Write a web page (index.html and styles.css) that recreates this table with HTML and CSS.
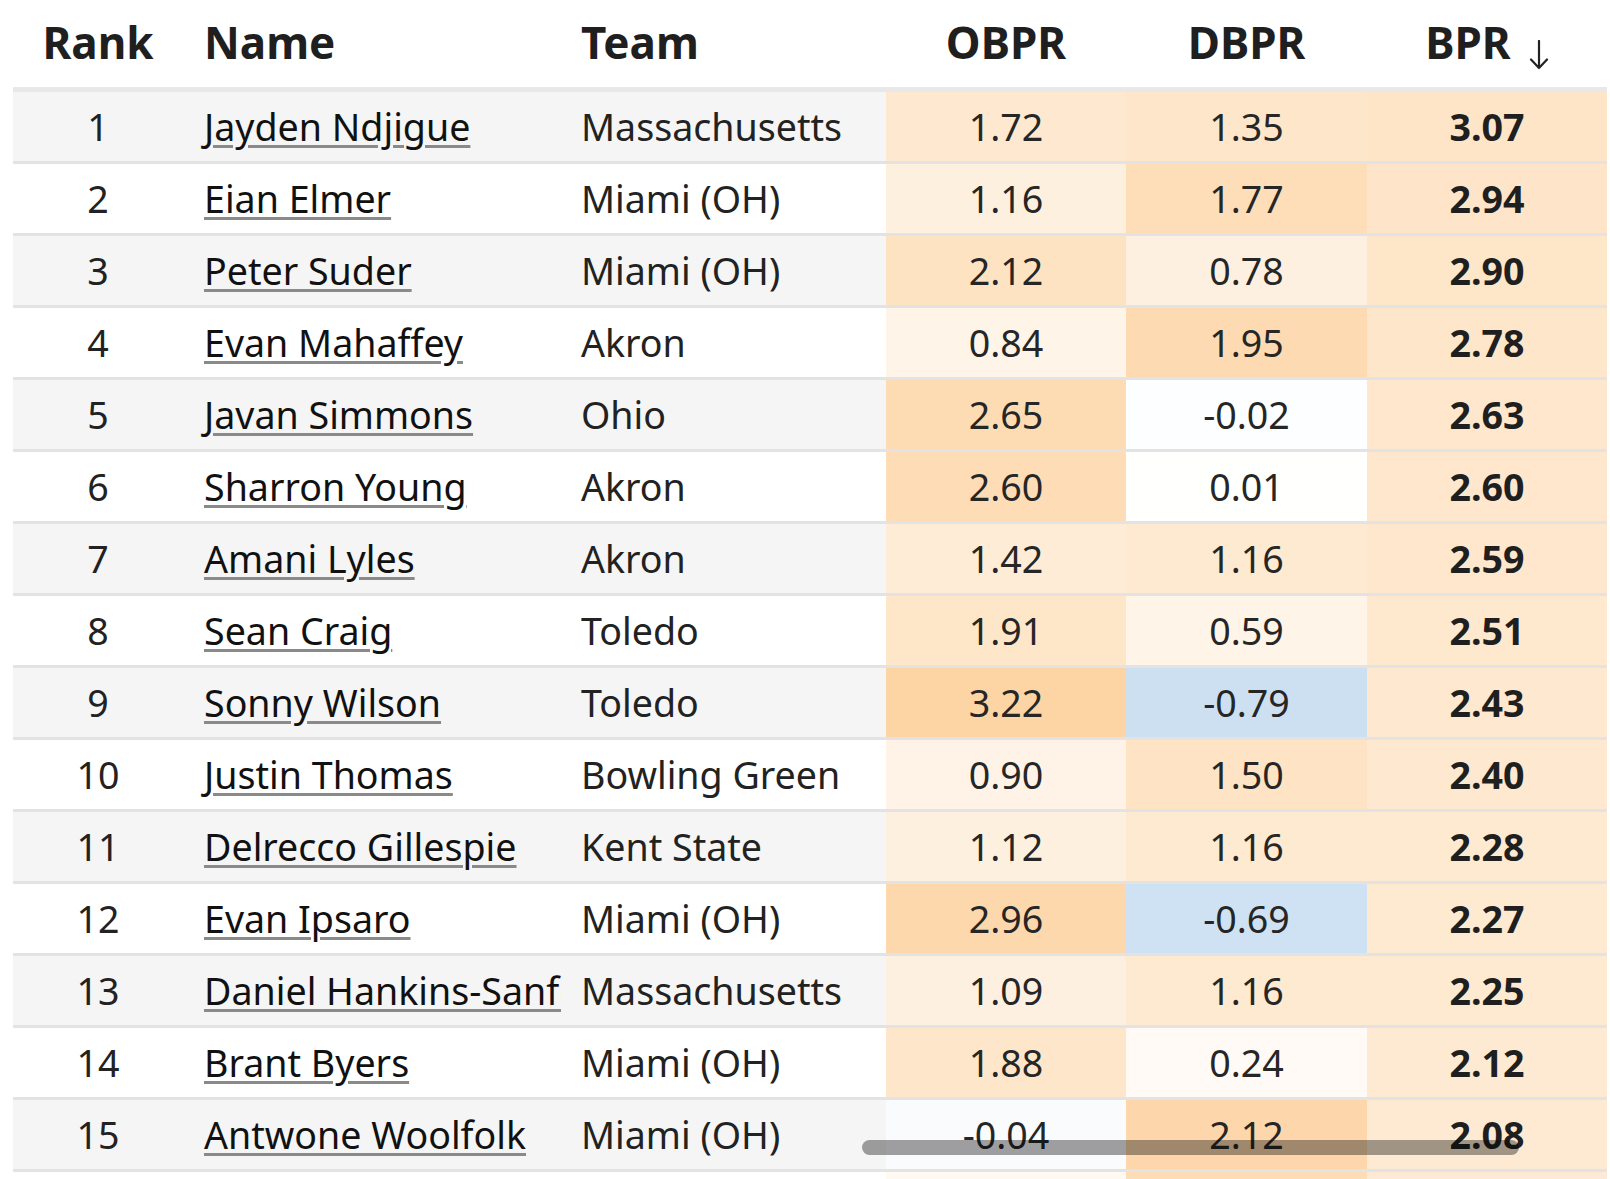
FILE: index.html
```html
<!DOCTYPE html>
<html lang="en">
<head>
<meta charset="utf-8">
<title>BPR Rankings</title>
<link rel="stylesheet" href="styles.css">
</head>
<body>
<table class="stats">
  <colgroup>
    <col class="col-rank">
    <col class="col-name">
    <col class="col-team">
    <col class="col-num">
    <col class="col-num2">
    <col class="col-num">
  </colgroup>
  <thead>
    <tr>
      <th class="h-center">Rank</th>
      <th class="h-left h-name">Name</th>
      <th class="h-left h-team">Team</th>
      <th class="h-center">OBPR</th>
      <th class="h-center">DBPR</th>
      <th class="h-center">BPR<svg class="sort-arrow" viewBox="0 0 20 30" width="20" height="30" aria-hidden="true"><path d="M10 1 V28 M2 19.5 L10 28 L18 19.5"/></svg></th>
    </tr>
  </thead>
  <tbody>
    <tr class="odd">
      <td class="rank">1</td><td class="name"><a href="#">Jayden Ndjigue</a></td><td class="team">Massachusetts</td>
      <td class="num" style="background:rgb(254,232,207)">1.72</td><td class="num" style="background:rgb(254,230,202)">1.35</td><td class="num bpr" style="background:rgb(254,229,199)">3.07</td>
    </tr>
    <tr>
      <td class="rank">2</td><td class="name"><a href="#">Eian Elmer</a></td><td class="team">Miami (OH)</td>
      <td class="num" style="background:rgb(254,240,222)">1.16</td><td class="num" style="background:rgb(253,222,185)">1.77</td><td class="num bpr" style="background:rgb(254,229,201)">2.94</td>
    </tr>
    <tr class="odd">
      <td class="rank">3</td><td class="name"><a href="#">Peter Suder</a></td><td class="team">Miami (OH)</td>
      <td class="num" style="background:rgb(254,227,195)">2.12</td><td class="num" style="background:rgb(254,240,224)">0.78</td><td class="num bpr" style="background:rgb(254,230,201)">2.90</td>
    </tr>
    <tr>
      <td class="rank">4</td><td class="name"><a href="#">Evan Mahaffey</a></td><td class="team">Akron</td>
      <td class="num" style="background:rgb(254,244,231)">0.84</td><td class="num" style="background:rgb(253,218,178)">1.95</td><td class="num bpr" style="background:rgb(254,230,203)">2.78</td>
    </tr>
    <tr class="odd">
      <td class="rank">5</td><td class="name"><a href="#">Javan Simmons</a></td><td class="team">Ohio</td>
      <td class="num" style="background:rgb(253,220,180)">2.65</td><td class="num" style="background:rgb(253,254,255)">-0.02</td><td class="num bpr" style="background:rgb(254,231,205)">2.63</td>
    </tr>
    <tr>
      <td class="rank">6</td><td class="name"><a href="#">Sharron Young</a></td><td class="team">Akron</td>
      <td class="num" style="background:rgb(253,220,182)">2.60</td><td class="num" style="background:rgb(255,255,254)">0.01</td><td class="num bpr" style="background:rgb(254,231,205)">2.60</td>
    </tr>
    <tr class="odd">
      <td class="rank">7</td><td class="name"><a href="#">Amani Lyles</a></td><td class="team">Akron</td>
      <td class="num" style="background:rgb(254,236,215)">1.42</td><td class="num" style="background:rgb(254,233,209)">1.16</td><td class="num bpr" style="background:rgb(254,231,205)">2.59</td>
    </tr>
    <tr>
      <td class="rank">8</td><td class="name"><a href="#">Sean Craig</a></td><td class="team">Toledo</td>
      <td class="num" style="background:rgb(254,230,201)">1.91</td><td class="num" style="background:rgb(254,244,232)">0.59</td><td class="num bpr" style="background:rgb(254,232,206)">2.51</td>
    </tr>
    <tr class="odd">
      <td class="rank">9</td><td class="name"><a href="#">Sonny Wilson</a></td><td class="team">Toledo</td>
      <td class="num" style="background:rgb(253,212,164)">3.22</td><td class="num" style="background:rgb(204,224,242)">-0.79</td><td class="num bpr" style="background:rgb(254,232,207)">2.43</td>
    </tr>
    <tr>
      <td class="rank">10</td><td class="name"><a href="#">Justin Thomas</a></td><td class="team">Bowling Green</td>
      <td class="num" style="background:rgb(254,243,230)">0.90</td><td class="num" style="background:rgb(254,227,196)">1.50</td><td class="num bpr" style="background:rgb(254,232,207)">2.40</td>
    </tr>
    <tr class="odd">
      <td class="rank">11</td><td class="name"><a href="#">Delrecco Gillespie</a></td><td class="team">Kent State</td>
      <td class="num" style="background:rgb(254,240,223)">1.12</td><td class="num" style="background:rgb(254,233,209)">1.16</td><td class="num bpr" style="background:rgb(254,233,209)">2.28</td>
    </tr>
    <tr>
      <td class="rank">12</td><td class="name"><a href="#">Evan Ipsaro</a></td><td class="team">Miami (OH)</td>
      <td class="num" style="background:rgb(253,216,172)">2.96</td><td class="num" style="background:rgb(207,226,243)">-0.69</td><td class="num bpr" style="background:rgb(254,233,209)">2.27</td>
    </tr>
    <tr class="odd">
      <td class="rank">13</td><td class="name"><a href="#">Daniel Hankins-Sanford</a></td><td class="team">Massachusetts</td>
      <td class="num" style="background:rgb(254,240,224)">1.09</td><td class="num" style="background:rgb(254,233,209)">1.16</td><td class="num bpr" style="background:rgb(254,233,209)">2.25</td>
    </tr>
    <tr>
      <td class="rank">14</td><td class="name"><a href="#">Brant Byers</a></td><td class="team">Miami (OH)</td>
      <td class="num" style="background:rgb(254,230,202)">1.88</td><td class="num" style="background:rgb(255,250,245)">0.24</td><td class="num bpr" style="background:rgb(254,234,211)">2.12</td>
    </tr>
    <tr class="odd">
      <td class="rank">15</td><td class="name"><a href="#">Antwone Woolfolk</a></td><td class="team">Miami (OH)</td>
      <td class="num" style="background:rgb(250,251,253)">-0.04</td><td class="num" style="background:rgb(253,215,171)">2.12</td><td class="num bpr" style="background:rgb(254,234,211)">2.08</td>
    </tr>
    <tr>
      <td class="rank">&nbsp;</td><td class="name">&nbsp;</td><td class="team">&nbsp;</td>
      <td class="num" style="background:rgb(255,249,242)">&nbsp;</td><td class="num" style="background:rgb(253,220,184)">&nbsp;</td><td class="num bpr" style="background:rgb(254,234,212)">&nbsp;</td>
    </tr>
  </tbody>
</table>
<div class="scroll-thumb"></div>
</body>
</html>
```
FILE: styles.css
```css
html, body {
  margin: 0;
  padding: 0;
  overflow: hidden;
  background: #ffffff;
}

body {
  font-family: "Noto Sans", "Open Sans", "DejaVu Sans", sans-serif;
  color: #222222;
}

.stats {
  table-layout: fixed;
  width: 1594px;
  margin-left: 13px;
  border-collapse: separate;
  border-spacing: 0;
}

.col-rank { width: 170px; }
.col-name { width: 378px; }
.col-team { width: 325px; }
.col-num { width: 240px; }
.col-num2 { width: 241px; }

.stats th {
  box-sizing: border-box;
  height: 92px;
  padding: 0 0 4px 0;
  font-size: 44px;
  font-weight: 700;
  color: #1f1f1f;
  border-bottom: 5px solid #e8e8e8;
  vertical-align: middle;
  white-space: nowrap;
}

.h-center { text-align: center; }
.h-left { text-align: left; }
.h-name { padding-left: 21px !important; }
.h-team { padding-left: 20px !important; }

.sort-arrow {
  width: 20px;
  height: 30px;
  margin-left: 18px;
  vertical-align: -11px;
  fill: none;
  stroke: #222222;
  stroke-width: 2.2;
  stroke-linecap: round;
  stroke-linejoin: round;
}

.stats td {
  box-sizing: border-box;
  height: 72px;
  padding: 0;
  font-size: 37.6px;
  line-height: 1.2;
  border-bottom: 3px solid #e3e3e3;
  vertical-align: middle;
  white-space: nowrap;
  overflow: hidden;
  background: #ffffff;
}

.stats tr.odd td {
  background: #f5f5f5;
}

.stats td.rank {
  text-align: center;
  color: #222222;
}

.stats td.name {
  padding-left: 21px;
  text-overflow: clip;
}

.stats td.name a {
  color: #111111;
  text-decoration: underline;
  text-decoration-color: #8a8a8a;
  text-decoration-thickness: 3px;
  text-underline-offset: 4px;
}

.stats td.team {
  padding-left: 20px;
  color: #222222;
}

.stats td.num {
  text-align: center;
  color: #262626;
}

.stats td.bpr {
  font-weight: 700;
  color: #1f1f1f;
}

.scroll-thumb {
  position: fixed;
  left: 862px;
  top: 1140px;
  width: 657px;
  height: 15px;
  border-radius: 8px;
  background: rgba(0, 0, 0, 0.37);
}
```
